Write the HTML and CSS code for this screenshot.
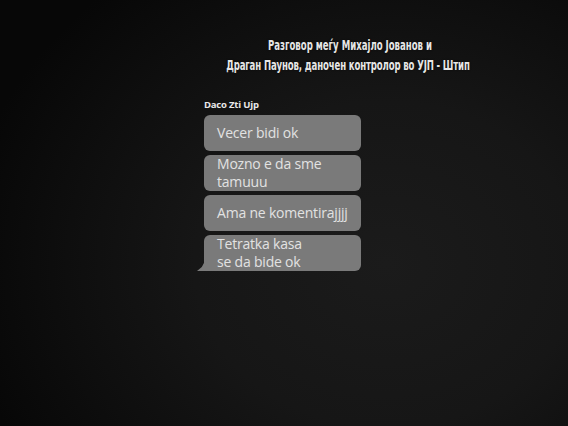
FILE: index.html
```html
<!DOCTYPE html>
<html lang="mk">
<head>
<meta charset="utf-8">
<title>Разговор</title>
<link rel="stylesheet" href="styles.css">
</head>
<body>
<div class="screen">
  <header class="title">
    <p>Разговор меѓу Михајло Јованов и</p>
    <p>Драган Паунов, даночен контролор во УЈП - Штип</p>
  </header>
  <section class="chat">
    <div class="sender">Daco Zti Ujp</div>
    <div class="bubbles">
      <div class="bubble">Vecer bidi ok</div>
      <div class="bubble">Mozno e da sme<br>tamuuu</div>
      <div class="bubble">Ama ne komentirajjjj</div>
      <div class="bubble last">Tetratka kasa<br>se da bide ok</div>
    </div>
  </section>
</div>
</body>
</html>
```
FILE: styles.css
```css
html, body {
  margin: 0;
  padding: 0;
  background: #0c0c0c;
}
.screen {
  width: 568px;
  height: 426px;
  box-sizing: border-box;
  padding-top: 35px;
  background: radial-gradient(ellipse 75% 85% at 68% 62%, #1b1b1b 0%, #161616 45%, #0e0e0e 75%, #070707 100%);
  overflow: hidden;
}
.title {
  width: 420px;
  margin-left: 140px;
  text-align: center;
  white-space: nowrap;
  font-family: "DejaVu Sans Condensed", "Liberation Sans Narrow", sans-serif;
  font-weight: bold;
  font-size: 14px;
  line-height: 20px;
  color: #e6e6e6;
  text-shadow: 0 0 2px rgba(0,0,0,0.6);
  transform: scaleX(0.68);
  transform-origin: 210px 0;
}
.title p {
  margin: 0;
}
.title p + p {
  letter-spacing: -0.2px;
  margin-right: 6px;
}
.chat {
  margin-left: 204px;
  margin-top: 24px;
  width: 157px;
}
.sender {
  font-family: "Open Sans", "Noto Sans", sans-serif;
  font-weight: bold;
  font-size: 9.5px;
  line-height: 12px;
  color: #e8e8e8;
  letter-spacing: -0.2px;
}
.bubbles {
  margin-top: 4px;
  display: flex;
  flex-direction: column;
  gap: 4px;
}
.bubble {
  position: relative;
  box-sizing: border-box;
  height: 36px;
  display: flex;
  align-items: center;
  padding: 0 8px 0 13px;
  background: #7a7a7a;
  border-radius: 6px;
  font-family: "Open Sans", "Noto Sans", sans-serif;
  font-size: 14px;
  line-height: 18px;
  color: #e2e2e2;
  letter-spacing: -0.2px;
}
.bubble.last {
  border-bottom-left-radius: 0;
}
.bubble.last::before {
  content: "";
  position: absolute;
  left: -7px;
  bottom: 0;
  width: 8px;
  height: 10px;
  background: #7a7a7a;
  clip-path: polygon(100% 0, 100% 100%, 0 100%, 60% 60%);
}
```
